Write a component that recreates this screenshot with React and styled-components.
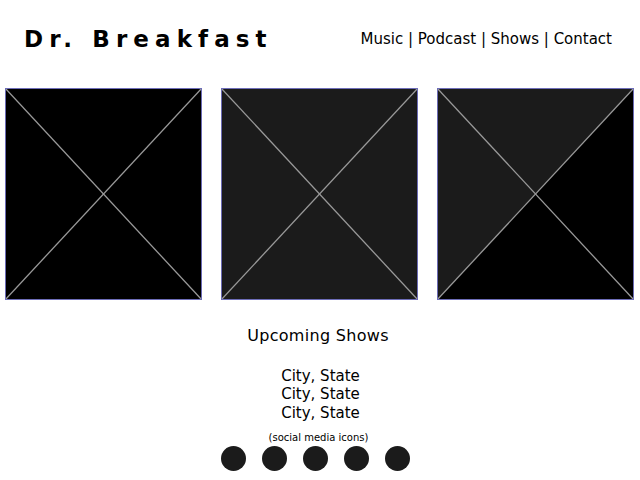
import React from 'react';
import styled, { createGlobalStyle } from 'styled-components';

const GlobalStyle = createGlobalStyle`
  body {
    margin: 0;
    background: #fff;
    font-family: "DejaVu Sans", sans-serif;
    color: #000;
  }
`;

const photos = [
  { id: 1, top: '#000', left: '#000', right: '#000', bottom: '#000' },
  { id: 2, top: '#1b1b1b', left: '#1b1b1b', right: '#1b1b1b', bottom: '#1b1b1b' },
  { id: 3, top: '#1b1b1b', left: '#1b1b1b', right: '#000', bottom: '#000' },
];

const shows = ['City, State', 'City, State', 'City, State'];

function Placeholder({ p }) {
  return (
    <svg width="100%" height="100%" viewBox="0 0 200 212" preserveAspectRatio="none">
      <polygon points="0,0 200,0 100,106" fill={p.top} />
      <polygon points="0,0 0,212 100,106" fill={p.left} />
      <polygon points="200,0 200,212 100,106" fill={p.right} />
      <polygon points="0,212 200,212 100,106" fill={p.bottom} />
      <line x1="0" y1="0" x2="200" y2="212" stroke="#9a9a9a" strokeWidth="1.3" />
      <line x1="200" y1="0" x2="0" y2="212" stroke="#9a9a9a" strokeWidth="1.3" />
      <rect x="0.5" y="0.5" width="199" height="211" fill="none" stroke="#6d6db8" strokeWidth="1" />
    </svg>
  );
}

function App() {
  return (
    <Page>
      <GlobalStyle />
      <Header>
        <Logo>Dr. Breakfast</Logo>
        <Nav>Music | Podcast | Shows | Contact</Nav>
      </Header>
      <Gallery>
        {photos.map((p) => (
          <Photo key={p.id}>
            <Placeholder p={p} />
          </Photo>
        ))}
      </Gallery>
      <Shows>
        <ShowsTitle>Upcoming Shows</ShowsTitle>
        <ShowList>
          {shows.map((s, i) => (
            <li key={i}>{s}</li>
          ))}
        </ShowList>
        <Caption>(social media icons)</Caption>
        <Socials>
          {[0, 1, 2, 3, 4].map((i) => (
            <Dot key={i} />
          ))}
        </Socials>
      </Shows>
    </Page>
  );
}

export default App;

const Page = styled.div`
  width: 640px;
  height: 480px;
  overflow: hidden;
`;

const Header = styled.header`
  display: flex;
  justify-content: space-between;
  align-items: center;
  height: 78px;
  padding: 0 28px 0 24px;
`;

const Logo = styled.h1`
  margin: 0;
  font-size: 23px;
  font-weight: 700;
  letter-spacing: 6.1px;
`;

const Nav = styled.nav`
  font-size: 15px;
`;

const Gallery = styled.div`
  display: flex;
  gap: 19px;
  padding: 10px 6px 0 5px;
`;

const Photo = styled.div`
  width: 198px;
  height: 212px;
  background: #000;
`;

const Shows = styled.section`
  display: flex;
  flex-direction: column;
  align-items: center;
  padding-top: 26px;
  padding-right: 3px;
`;

const ShowsTitle = styled.h2`
  margin: 0 0 0 -1px;
  font-size: 16px;
  font-weight: 400;
  letter-spacing: 0.3px;
`;

const ShowList = styled.ul`
  list-style: none;
  margin: 22px 0 0 4px;
  padding: 0;
  font-size: 15px;
  line-height: 18.3px;
  text-align: center;
`;

const Caption = styled.div`
  margin-top: 10px;
  font-size: 10px;
`;

const Socials = styled.div`
  display: flex;
  gap: 16px;
  margin: 3px 6px 0 0;
`;

const Dot = styled.span`
  width: 25px;
  height: 25px;
  border-radius: 50%;
  background: #1b1b1b;
`;
